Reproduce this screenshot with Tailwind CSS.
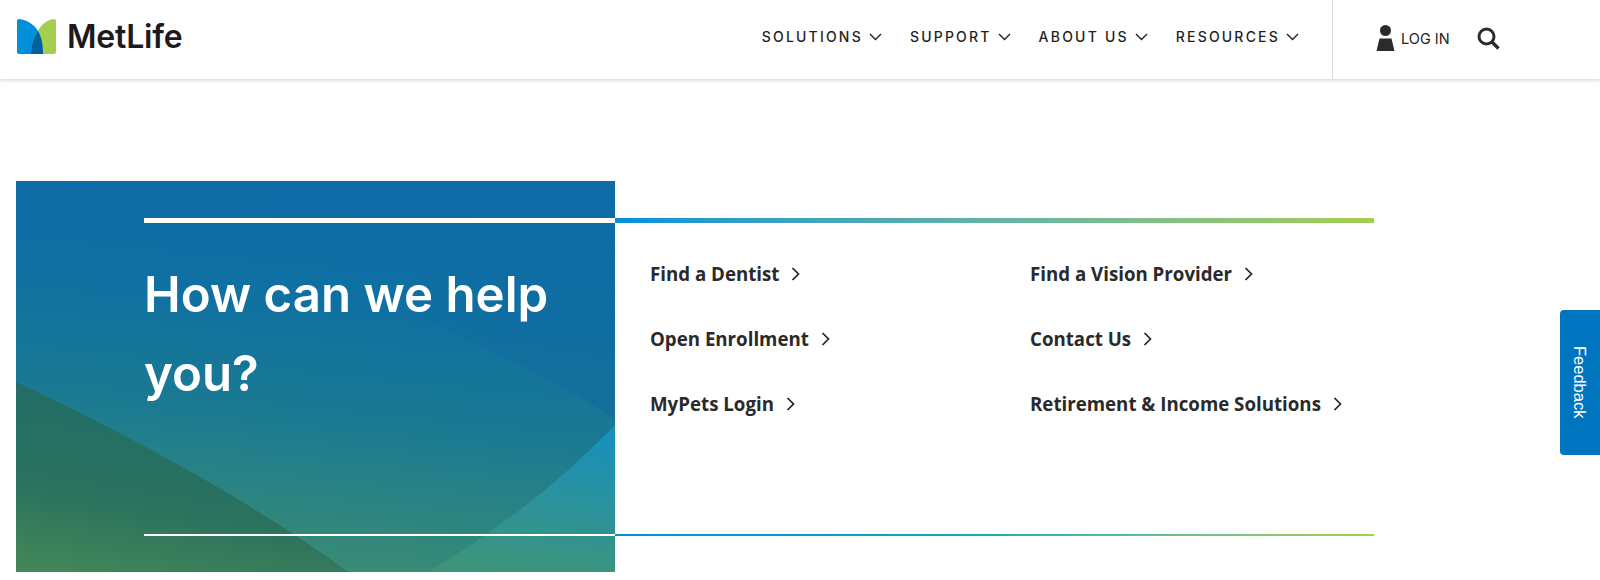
<!DOCTYPE html>
<html lang="en">
<head>
  <meta charset="UTF-8" />
  <meta name="viewport" content="width=device-width, initial-scale=1" />
  <title>MetLife</title>
  <script src="https://cdn.jsdelivr.net/npm/@tailwindcss/browser@4"></script>
</head>

<body class="bg-white font-['Inter',sans-serif] overflow-hidden h-[580px] relative">

  <!-- Header -->
  <header class="h-[79px] flex items-stretch bg-white shadow-[0_1px_4px_rgba(0,0,0,0.2)] pl-[17px]">
    <a href="#" class="flex items-center gap-[11px] h-[73px]">
      <svg class="w-[39px] h-[35px]" viewBox="0 0 39 35">
        <path fill="#0090da" d="M0 2Q0 0 2 0C10 1 17 5 21 12C24 17 26 24 26 35H2Q0 35 0 33Z" />
        <path fill="#a4ce4e" d="M39 2Q39 0 37 0C29 1 24 6 21 12C17 18 14 25 14 35H37Q39 35 39 33Z" />
        <path fill="#0061a0" d="M21 12C24 17 26 24 26 35H14C14 25 17 18 21 12Z" />
      </svg>
      <span class="text-[32px] font-semibold tracking-[-0.2px] text-[#1c1a1c]">MetLife</span>
    </a>

    <nav class="ml-auto flex items-center gap-[28px] text-[14px] font-medium tracking-[2.2px] text-[#1f1f1f] h-[73px]">
      <a href="#" class="flex items-center gap-[6px]">SOLUTIONS
        <svg class="w-[13px] h-[8px]" viewBox="0 0 13 8" fill="none" stroke="#222" stroke-width="1.4"><path d="M1 1l5.5 5.5L12 1" /></svg>
      </a>
      <a href="#" class="flex items-center gap-[6px]">SUPPORT
        <svg class="w-[13px] h-[8px]" viewBox="0 0 13 8" fill="none" stroke="#222" stroke-width="1.4"><path d="M1 1l5.5 5.5L12 1" /></svg>
      </a>
      <a href="#" class="flex items-center gap-[6px]">ABOUT US
        <svg class="w-[13px] h-[8px]" viewBox="0 0 13 8" fill="none" stroke="#222" stroke-width="1.4"><path d="M1 1l5.5 5.5L12 1" /></svg>
      </a>
      <a href="#" class="flex items-center gap-[6px]">RESOURCES
        <svg class="w-[13px] h-[8px]" viewBox="0 0 13 8" fill="none" stroke="#222" stroke-width="1.4"><path d="M1 1l5.5 5.5L12 1" /></svg>
      </a>
    </nav>

    <div class="ml-[33px] w-[268px] border-l border-[#dcdcd8] h-[79px]">
      <div class="flex items-center pl-[43px] h-[77px]">
        <a href="#" class="flex items-center gap-[6px] text-[14.5px] text-[#222]">
          <svg class="w-[19px] h-[27px]" viewBox="0 0 19 27" fill="#2b2b2b">
            <circle cx="9.5" cy="5.5" r="5.5" />
            <path d="M3.5 13.5H15.5L18.500 26H0.500Z" />
          </svg>
          LOG IN
        </a>
        <svg class="ml-[27px] w-[23px] h-[23px]" viewBox="0 0 23 23" fill="none" stroke="#2b2b2b">
          <circle cx="9.500" cy="9.500" r="7.500" stroke-width="3" />
          <path d="M15 15l6.500 6.500" stroke-width="3.400" />
        </svg>
      </div>
    </div>
  </header>

  <!-- Help section -->
  <main class="pt-[102px] pl-4 flex">
    <section class="relative w-[599px] h-[391px] overflow-hidden pl-[128px] pt-[37px] text-white">
      <svg class="absolute inset-0 w-full h-full" viewBox="0 0 599 391" preserveAspectRatio="none">
        <defs>
          <linearGradient id="bg" x1="0.55" y1="0" x2="0.4" y2="1">
            <stop offset="0" stop-color="#0d6ba6" />
            <stop offset="0.3" stop-color="#0f70a2" />
            <stop offset="0.6" stop-color="#1a7a92" />
            <stop offset="1" stop-color="#3c8d72" />
          </linearGradient>
          <linearGradient id="band" x1="0.45" y1="0" x2="0.6" y2="1">
            <stop offset="0" stop-color="#0e5f9e" stop-opacity="0" />
            <stop offset="1" stop-color="#0e5f9e" stop-opacity="0.35" />
          </linearGradient>
          <linearGradient id="dark" x1="0.5" y1="0" x2="0.2" y2="1">
            <stop offset="0" stop-color="#1f6c68" />
            <stop offset="0.6" stop-color="#2a715f" />
            <stop offset="1" stop-color="#418558" />
          </linearGradient>
          <linearGradient id="light" x1="0.8" y1="0" x2="0.6" y2="1">
            <stop offset="0" stop-color="#1790bd" />
            <stop offset="1" stop-color="#3c947c" />
          </linearGradient>
        </defs>
        <rect width="599" height="391" fill="url(#bg)" />
        <path fill="url(#band)" d="M408 138C470 165 540 200 599 238V60H408Z" />
        <path fill="url(#dark)" d="M0 201C130 262 250 330 332 391H0Z" />
        <path fill="url(#light)" d="M599 244C540 305 480 350 412 391H599Z" />
      </svg>
      <div class="relative">
        <div class="h-[5px] bg-white"></div>
        <h1 class="mt-[32px] w-[420px] text-[49.2px] leading-[79px] font-semibold">How can we help you?</h1>
      </div>
      <div class="absolute left-[128px] right-0 top-[353px] h-[2px] bg-white"></div>
    </section>

    <section class="relative w-[759px] pt-[37px]">
      <div class="h-[5px] bg-gradient-to-r from-[#0090da] to-[#a4ce4e]"></div>
      <div class="mt-[38px] ml-[35px] grid grid-cols-[380px_1fr] gap-y-[39px] font-['Open_Sans',sans-serif] text-[18.7px] leading-[26px] font-bold text-[#2a2a2a]">
        <a href="#" class="flex items-center gap-[12px]">Find a Dentist
          <svg class="w-[9px] h-[14px]" viewBox="0 0 9 14" fill="none" stroke="#222" stroke-width="1.7"><path d="M1.500 1l6 6-6 6" /></svg>
        </a>
        <a href="#" class="flex items-center gap-[12px]">Find a Vision Provider
          <svg class="w-[9px] h-[14px]" viewBox="0 0 9 14" fill="none" stroke="#222" stroke-width="1.7"><path d="M1.500 1l6 6-6 6" /></svg>
        </a>
        <a href="#" class="flex items-center gap-[12px]">Open Enrollment
          <svg class="w-[9px] h-[14px]" viewBox="0 0 9 14" fill="none" stroke="#222" stroke-width="1.7"><path d="M1.500 1l6 6-6 6" /></svg>
        </a>
        <a href="#" class="flex items-center gap-[12px]">Contact Us
          <svg class="w-[9px] h-[14px]" viewBox="0 0 9 14" fill="none" stroke="#222" stroke-width="1.7"><path d="M1.500 1l6 6-6 6" /></svg>
        </a>
        <a href="#" class="flex items-center gap-[12px]">MyPets Login
          <svg class="w-[9px] h-[14px]" viewBox="0 0 9 14" fill="none" stroke="#222" stroke-width="1.7"><path d="M1.500 1l6 6-6 6" /></svg>
        </a>
        <a href="#" class="flex items-center gap-[12px]">Retirement &amp; Income Solutions
          <svg class="w-[9px] h-[14px]" viewBox="0 0 9 14" fill="none" stroke="#222" stroke-width="1.7"><path d="M1.500 1l6 6-6 6" /></svg>
        </a>
      </div>
      <div class="absolute left-0 right-0 top-[353px] h-[2px] bg-gradient-to-r from-[#0090da] via-[#10b0b0] to-[#a4ce4e]"></div>
    </section>
  </main>

  <!-- Feedback tab -->
  <a href="#" class="absolute right-0 top-[310px] w-[40px] h-[145px] bg-[#0075bf] rounded-l-[4px] flex items-center justify-center pr-[1px] text-white text-[16.5px] font-['Liberation_Sans',sans-serif] [writing-mode:vertical-rl]">Feedback</a>

</body>
</html>
